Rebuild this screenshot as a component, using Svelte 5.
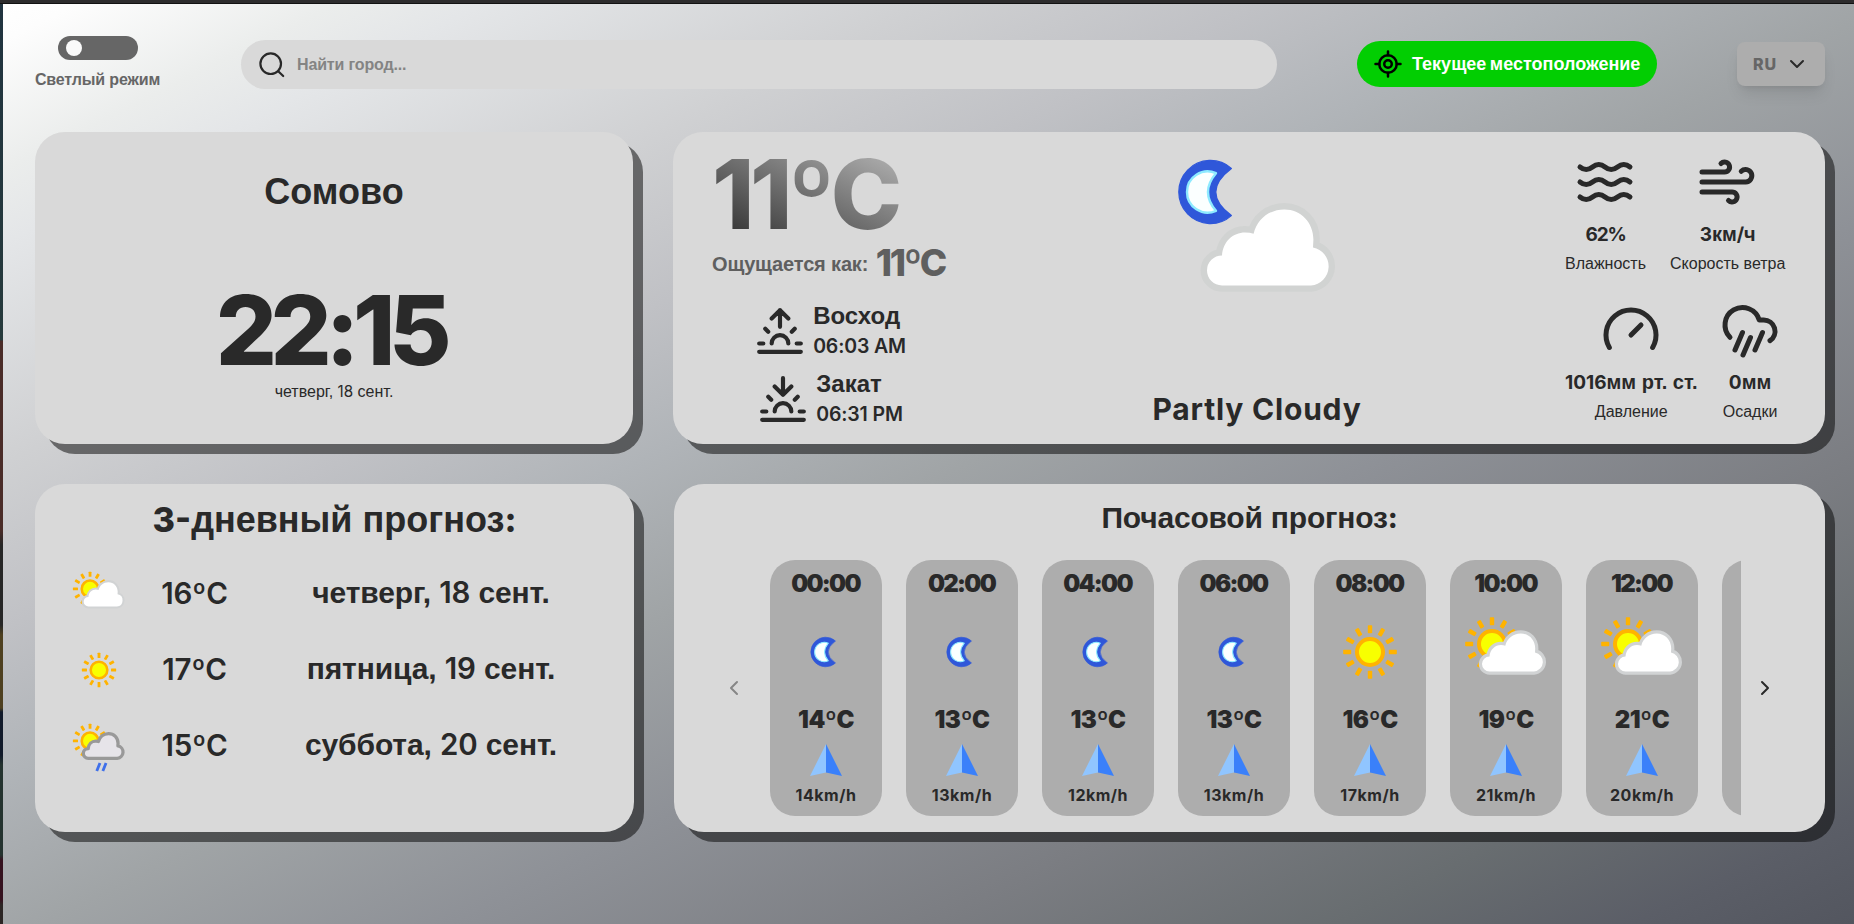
<script>
  const hours = [
    { time: '00:00', icon: 'moon', temp: 14, wind: 14 },
    { time: '02:00', icon: 'moon', temp: 13, wind: 13 },
    { time: '04:00', icon: 'moon', temp: 13, wind: 12 },
    { time: '06:00', icon: 'moon', temp: 13, wind: 13 },
    { time: '08:00', icon: 'sun', temp: 16, wind: 17 },
    { time: '10:00', icon: 'partly', temp: 19, wind: 21 },
    { time: '12:00', icon: 'partly', temp: 21, wind: 20 },
    { time: '', icon: '', temp: '', wind: '' },
  ];
  const days = [
    { icon: 'partly', temp: 16, name: 'четверг,', num: 18 },
    { icon: 'sun', temp: 17, name: 'пятница,', num: 19 },
    { icon: 'shower', temp: 15, name: 'суббота,', num: 20 },
  ];
  const rays = [0, 30, 60, 90, 120, 150, 180, 210, 240, 270, 300, 330];
  const cloud = 'M7.5 38A7.5 7.5 0 0 1 7.5 23C8 16 13 11.5 19 11.5Q21.5 11.5 23.3 12.2C25 5 31 0 38.7 0C47 0 53.2 6.5 53.2 15L53 19A9.6 9.6 0 0 1 52 38Z';
  const crescent = 'M37.2 11.2A15.8 15.8 0 1 0 37.2 34.8Q21.6 23 37.2 11.2Z';
  const crescentCore = 'M29.5 13.6A10.3 10.3 0 1 0 29.5 32.4Q21.5 23 29.5 13.6Z';
</script>

{#snippet sun(x, y)}
  <g transform="translate({x} {y})">
    {#each rays as a}
      <rect x="-2.2" y="-26.8" width="4.4" height="8" rx="0.8" fill="#ffb300" transform="rotate({a})" />
    {/each}
    <circle r="13" fill="#f8ff00" stroke="#ffb300" stroke-width="4" />
  </g>
{/snippet}

{#snippet moon()}
  <path d={crescent} fill="#2f57d9" stroke="#2f57d9" stroke-width=".6" stroke-linejoin="round" />
  <path d={crescentCore} fill="#fbffff" stroke="#8eeaff" stroke-width="1.2" stroke-linejoin="round" />
{/snippet}

{#snippet weather(kind)}
  <svg class="weather" viewBox="0 0 100 100" aria-hidden="true">
    {#if kind === 'moon'}
      <g transform="translate(50.2 50) scale(.94) translate(-27.3 -23)">{@render moon()}</g>
    {:else if kind === 'sun'}
      {@render sun(50, 50)}
    {:else if kind === 'partly'}
      {@render sun(36, 42)}
      <path d={cloud} transform="translate(26 31.5)" fill="#fff" stroke="#d1d3d4" stroke-width="6.4" stroke-linejoin="round" />
      <path d={cloud} transform="translate(26 31.5)" fill="#fff" />
    {:else if kind === 'shower'}
      {@render sun(36, 42)}
      <path d={cloud} transform="translate(25.500 30.5) scale(1.02)" fill="#e6e4e9" stroke="#999" stroke-width="5" stroke-linejoin="round" />
      <path d="M51.500 76.500 46.500 89M61 76.500 56 89" stroke="#3f70ea" stroke-width="4.4" />
    {:else if kind === 'night'}
      {@render moon()}
      <path d={cloud} transform="translate(25 31.7)" fill="#fff" stroke="#d1d3d2" stroke-width="6.4" stroke-linejoin="round" />
      <path d={cloud} transform="translate(25 31.7)" fill="#fff" />
    {/if}
  </svg>
{/snippet}

<div class="app">
  <div class="page">
    <header>
      <div class="mode">
        <div class="toggle"><i></i></div>
        <span>Светлый режим</span>
      </div>
      <div class="search">
        <svg width="28" height="28" viewBox="0 0 28 28" fill="none" stroke="#292929" stroke-width="2.2" stroke-linecap="round"><circle cx="12.7" cy="12.700" r="10.300" /><path d="M20.200 20.200l5 4.800" /></svg>
        <span>Найти город...</span>
      </div>
      <button class="locate">
        <svg width="30" height="30" viewBox="0 0 24 24" fill="none" stroke="#000" stroke-width="2" stroke-linecap="round"><path d="M2 12h3M19 12h3M12 2v3M12 19v3" /><circle cx="12" cy="12" r="7" /><circle cx="12" cy="12" r="3" /></svg>
        <span>Текущее местоположение</span>
      </button>
      <button class="lang">
        <span>RU</span>
        <svg width="24" height="24" viewBox="0 0 24 24" fill="none" stroke="#292929" stroke-width="2" stroke-linecap="round" stroke-linejoin="round"><path d="m6 9 6 6 6-6" /></svg>
      </button>
    </header>

    <div class="row">
      <section class="card city">
        <h1>Сомово</h1>
        <div class="clock">22:15</div>
        <div class="date">четверг, <span class="num">18</span> сент.</div>
      </section>

      <section class="card now">
        <div class="left">
          <div class="temp">11ºC</div>
          <div class="feels"><span>Ощущается как:</span> <b>11ºC</b></div>
          <div class="solar first">
            <svg width="50" height="50" viewBox="0 0 24 24" class="line"><path d="M12 2v8M4.930 10.930l1.410 1.410M2 18h2M20 18h2M19.070 10.930l-1.410 1.410M22 22H2M8 6l4-4 4 4M16 18a4 4 0 0 0-8 0" /></svg>
            <div><h3>Восход</h3><p>06:03 AM</p></div>
          </div>
          <div class="solar">
            <svg width="50" height="50" viewBox="0 0 24 24" class="line"><path d="M12 10V2M4.930 10.930l1.410 1.410M2 18h2M20 18h2M19.070 10.930l-1.410 1.410M22 22H2M16 6l-4 4-4-4M16 18a4 4 0 0 0-8 0" /></svg>
            <div><h3>Закат</h3><p>06:31 PM</p></div>
          </div>
        </div>
        <div class="middle">
          {@render weather('night')}
          <div class="cond">Partly Cloudy</div>
        </div>
        <div class="stats">
          <div class="pair">
            <div class="stat">
              <svg width="60" height="60" viewBox="0 0 24 24" class="line"><path d="M2 6c.6.5 1.200 1 2.500 1C7 7 7 5 9.500 5c2.600 0 2.400 2 5 2 2.500 0 2.500-2 5-2 1.300 0 1.900.5 2.500 1M2 12c.6.5 1.200 1 2.500 1 2.500 0 2.500-2 5-2 2.600 0 2.400 2 5 2 2.500 0 2.500-2 5-2 1.300 0 1.900.5 2.500 1M2 18c.6.5 1.200 1 2.500 1 2.500 0 2.500-2 5-2 2.600 0 2.400 2 5 2 2.500 0 2.500-2 5-2 1.300 0 1.900.5 2.500 1" /></svg>
              <b><span class="num tight">62%</span></b><span>Влажность</span>
            </div>
            <div class="stat">
              <svg width="60" height="60" viewBox="0 0 24 24" class="line"><path d="M17.700 7.700a2.500 2.500 0 1 1 1.800 4.300H2M9.600 4.600A2 2 0 1 1 11 8H2M12.600 19.400A2 2 0 1 0 14 16H2" /></svg>
              <b><span class="num">3</span>км<span class="num">/</span>ч</b><span>Скорость ветра</span>
            </div>
          </div>
          <div class="pair lower">
            <div class="stat">
              <svg width="60" height="60" viewBox="0 0 24 24" class="line"><path d="m12 14 4-4M3.340 19a10 10 0 1 1 17.320 0" /></svg>
              <b><span class="num">1016</span>мм рт. ст.</b><span>Давление</span>
            </div>
            <div class="stat">
              <svg width="60" height="60" viewBox="0 0 24 24" class="line"><path d="M4 14.899A7 7 0 1 1 15.710 8h1.790a4.500 4.500 0 0 1 2.500 8.242M9.200 22l3-7M9 13l-3 7M17 13l-3 7" /></svg>
              <b><span class="num">0</span>мм</b><span>Осадки</span>
            </div>
          </div>
        </div>
      </section>
    </div>

    <div class="row second">
      <section class="card days">
        <h2><span class="num">3-</span>дневный прогноз<span class="num">:</span></h2>
        {#each days as d}
          <div class="day">
            {@render weather(d.icon)}
            <span class="num">{d.temp}ºC</span>
            <span>{d.name} <span class="num">{d.num}</span> сент.</span>
          </div>
        {/each}
      </section>

      <section class="card hourly">
        <h2>Почасовой прогноз<span class="num">:</span></h2>
        <div class="carousel">
          <svg width="24" height="24" viewBox="0 0 24 24" class="nav off"><path d="m15 18-6-6 6-6" /></svg>
          <div class="view">
            {#each hours as h}
              <div class="pill">
                {#if h.time}
                  <b class="time">{h.time}</b>
                  {@render weather(h.icon)}
                  <b>{h.temp}ºC</b>
                  <svg class="wind" width="32" height="32" viewBox="0 0 32 32"><path d="M16 0 0 32 16 28.500Z" fill="#90c5ff" /><path d="M16 0 32 32 16 28.500Z" fill="#3a80fa" /></svg>
                  <small>{h.wind}km/h</small>
                {/if}
              </div>
            {/each}
          </div>
          <svg width="24" height="24" viewBox="0 0 24 24" class="nav"><path d="m9 18 6-6-6-6" /></svg>
        </div>
      </section>
    </div>
  </div>
</div>

<style>
  :global(body) { margin: 0; overflow: hidden; }
  h1, h2, h3, p { margin: 0; }
  button { border: 0; font: inherit; color: inherit; }
  svg { display: block; flex: none; }
  .app {
    box-sizing: border-box;
    width: 100vw;
    height: 100vh;
    padding: 4px 0 0 3px;
    color: #292929;
    font-family: "Liberation Sans", sans-serif;
    background:
      linear-gradient(#2d2c2d 0 3px, #121212 3px 4px) 0 0 / 100% 4px no-repeat,
      linear-gradient(#213440 0, #263a3c 340px, #4a2c28 341px 530px, #262626 545px 625px, #4e4020 635px 708px, #111a2a 712px 755px, #24332f 765px 855px, #35121f 860px 900px, #2c2625 905px);
    overflow: hidden;
  }
  .page {
    box-sizing: border-box;
    height: 100%;
    padding: 0 29px 0 32px;
    background: linear-gradient(to bottom right, #fff 0%, #fdfdfd 2%, #ebedec 9%, #e4e6e8 13%, #cfd0d2 25%, #c0c1c5 34%, #b0b4b8 42%, #a0a4a6 51%, #8e9197 62%, #7b7d82 75%, #686d70 86%, #5b5e67 94%, #53565f 100%);
  }
  header { display: flex; align-items: center; height: 128px; box-sizing: border-box; padding-bottom: 8px; }
  .mode { width: 125px; margin-right: 81px; display: flex; flex-direction: column; align-items: center; gap: 8px; font-weight: 700; font-size: 16px; line-height: 24px; letter-spacing: -.15px; color: #666; white-space: nowrap; }
  .toggle { width: 80px; height: 24px; border-radius: 12px; background: #666; box-sizing: border-box; padding: 4px 8px; }
  .toggle i { display: block; width: 16px; height: 16px; border-radius: 50%; background: #fafafa; }
  .search { display: flex; align-items: center; box-sizing: border-box; width: 1036px; height: 49px; padding: 1px 0 0 17px; gap: 11px; border-radius: 25px; background: #d9d9d9; color: #848484; font-weight: 700; font-size: 16px; letter-spacing: -.15px; }
  .locate { display: flex; align-items: center; box-sizing: border-box; width: 300px; height: 46px; margin-left: 80px; padding: 0 0 0 16px; gap: 9px; border-radius: 23px; background: #02ce02; color: #fff; font-weight: 700; font-size: 18px; white-space: nowrap; word-spacing: -1.5px; }
  .lang { display: flex; align-items: center; justify-content: space-between; box-sizing: border-box; width: 88px; height: 44px; margin-left: auto; padding: 0 16px; border-radius: 8px; background: #adadad; box-shadow: 0 10px 15px -3px rgba(0, 0, 0, .1), 0 4px 6px -4px rgba(0, 0, 0, .1); color: #666; font-family: Inter, sans-serif; font-weight: 800; font-size: 16px; letter-spacing: .8px; }
  .row { display: flex; justify-content: space-between; height: 312px; }
  .second { height: 348px; margin-top: 40px; }
  .card { box-sizing: border-box; border-radius: 30px; background: #d9d9d9; box-shadow: 10px 10px 0 rgba(0, 0, 0, .5); }
  .num { font-family: Inter, sans-serif; font-size: .95em; line-height: 0; }
  .line { fill: none; stroke: #292929; stroke-width: 2; stroke-linecap: round; stroke-linejoin: round; }

  .city { width: 598px; display: flex; flex-direction: column; align-items: center; padding-top: 33px; }
  h1 { font-size: 36px; line-height: 54px; }
  .clock { margin: 63px 7px 0 0; font: 800 96px/96px Inter, sans-serif; letter-spacing: -6.3px; }
  .date { margin-top: 2px; font-size: 16px; line-height: 24px; }

  .now { width: 1152px; display: flex; justify-content: space-between; padding: 14px 40px 12px 39px; }
  .left { display: flex; flex-direction: column; align-items: center; width: 237px; }
  .temp { align-self: flex-start; padding-right: 8px; font: 800 96px/96px Inter, sans-serif; letter-spacing: -4.5px; background: linear-gradient(to top right, #292929, #bbb); background-clip: text; color: transparent; }
  .feels { align-self: flex-start; margin-top: 2px; font-size: 20px; line-height: 40px; font-weight: 700; letter-spacing: -.15px; color: #5f5f5f; white-space: nowrap; }
  .feels b { position: relative; top: 5px; margin-left: 2px; font-family: Inter, sans-serif; font-weight: 800; font-size: 37px; line-height: 0; letter-spacing: -2.3px; }
  .solar { display: flex; align-items: center; gap: 8px; margin-top: 8px; }
  .first { margin-top: 17px; }
  h3 { font-size: 24px; line-height: 30px; }
  .solar p { font: 600 19.5px/30px Inter, sans-serif; letter-spacing: -.15px; }
  .middle { display: flex; flex-direction: column; align-items: center; justify-content: space-between; }
  .middle .weather { width: 200px; height: 200px; }
  .cond { position: relative; top: 1px; font: 700 30px/48px Inter, sans-serif; letter-spacing: .8px; }
  .stats { width: 220px; padding-top: 6px; white-space: nowrap; }
  .pair { display: flex; gap: 24px; height: 148px; }
  .lower { gap: 22px; }
  .stat { display: flex; flex-direction: column; align-items: center; font-size: 16px; line-height: 24px; }
  .stat svg { margin-right: 1px; }
  .stat b { font-size: 20px; line-height: 30px; margin: 7px 0 3px; }
  .stat .num { font-weight: 700; }
  .stat .tight { letter-spacing: -1.2px; }

  .days { width: 599px; padding: 9px 30px 0 32px; }
  h2 { text-align: center; font-size: 36px; line-height: 54px; }
  h2 .num { font-weight: 800; }
  .days h2 { margin: 0 -30px 8px -32px; }
  .day { display: grid; grid-template-columns: 64px 127px 1fr; align-items: center; text-align: center; height: 76px; font-weight: 700; font-size: 30px; line-height: 76px; letter-spacing: -.12px; }
  .day .weather { width: 64px; height: 64px; margin-top: 1px; }
  .day .num { font-size: 29.5px; font-weight: 600; }

  .hourly { width: 1151px; padding-top: 11px; }
  .hourly h2 { font-size: 30px; line-height: 45px; letter-spacing: -.2px; }
  .carousel { display: flex; align-items: center; margin-top: 20px; padding: 0 48px; }
  .nav { fill: none; stroke: #292929; stroke-width: 2; stroke-linecap: round; stroke-linejoin: round; }
  .off { stroke: #868686; }
  .view { display: flex; gap: 24px; width: 971px; margin: 0 12px 0 24px; overflow: hidden; }
  .pill { flex: none; display: flex; flex-direction: column; align-items: center; box-sizing: border-box; width: 112px; height: 256px; padding-top: 8px; border-radius: 25px; background: #adadad; font-family: Inter, sans-serif; font-weight: 700; }
  .pill b { font-size: 24px; line-height: 32px; letter-spacing: -.5px; }
  .pill .time { letter-spacing: -1.7px; margin-right: 1px; }
  .pill .weather { width: 100px; height: 100px; margin: 2px 0; }
  .wind { margin: 8px 0 7px; }
  small { font-size: 16px; line-height: 24px; letter-spacing: .5px; }
</style>
